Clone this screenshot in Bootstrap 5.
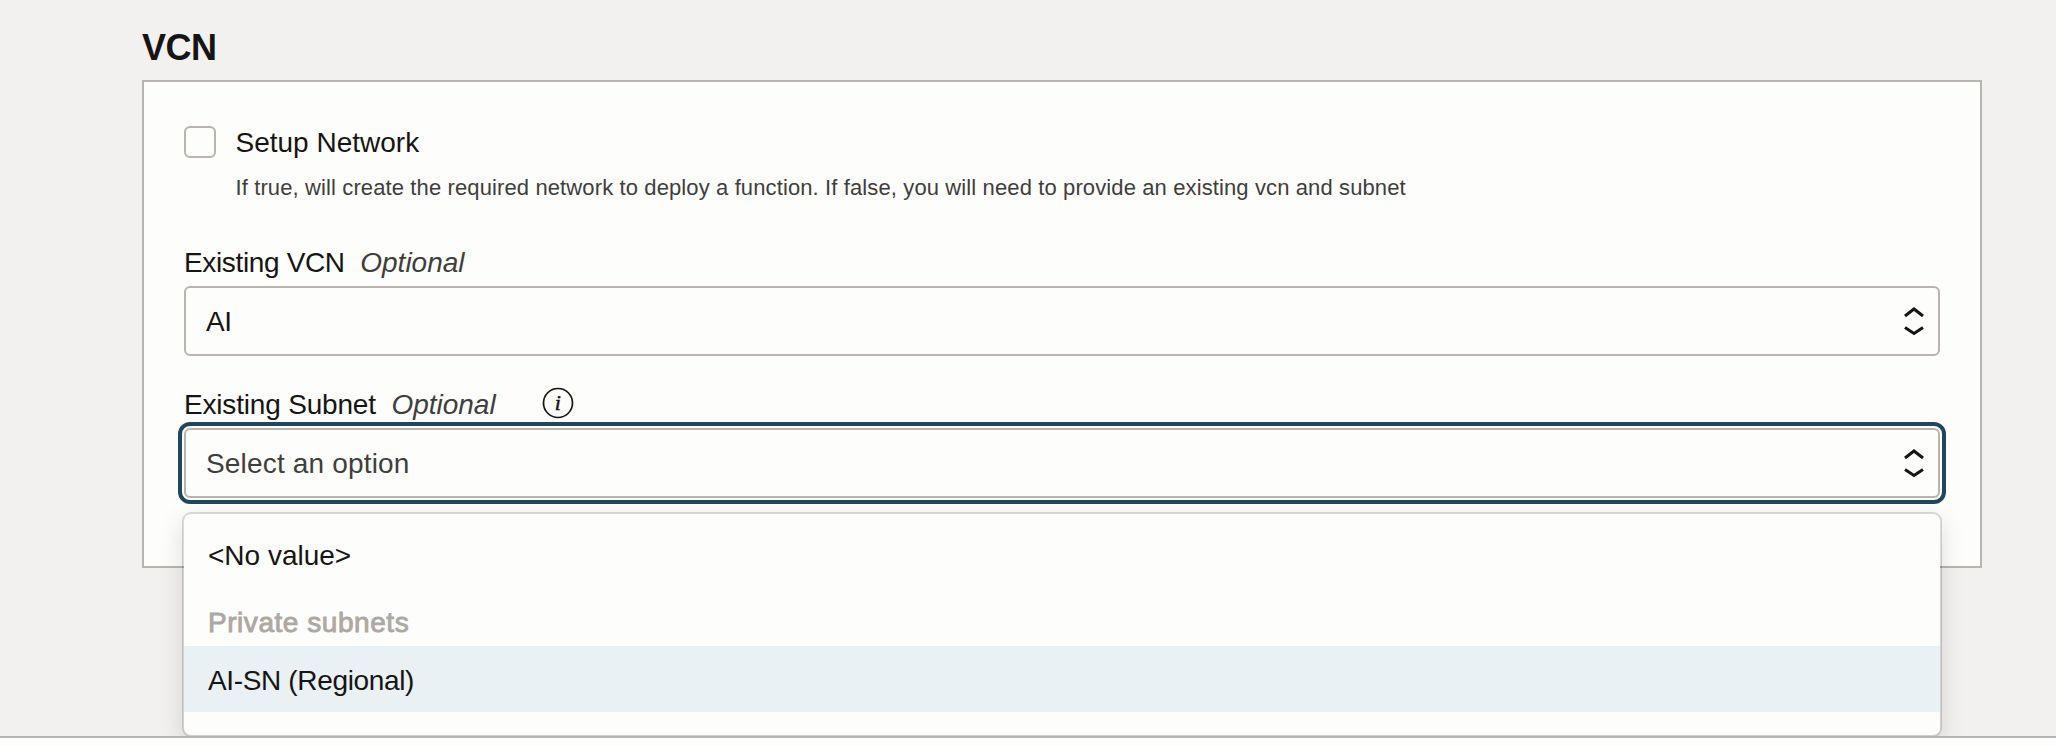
<!DOCTYPE html>
<html lang="en">
<head>
<meta charset="utf-8">
<title>VCN</title>
<link href="https://cdn.jsdelivr.net/npm/bootstrap@5.3.0/dist/css/bootstrap.min.css" rel="stylesheet">
<style>
  :root { --line: #b9b5ae; --surface: #fdfdfb; --ink: #161513; --soft: #403e3b; }
  body { font-family: "Liberation Sans", Arial, sans-serif; font-size: 28px; line-height: 42px; color: var(--ink); background: #f3f1f0; height: 746px; overflow: hidden; }
  main { height: 736px; padding: 24px 74px 0 142px; overflow: hidden; }
  h1 { font-size: 36px; line-height: 48px; font-weight: 700; letter-spacing: -.5px; margin: 0 0 8px; }
  .panel { height: 488px; border: 2px solid var(--line); background: var(--surface); padding: 40px; }
  .form-check-input.setup { width: 32px; height: 32px; margin: 4px 0 0; border: 2px solid var(--line); border-radius: 6px; background-color: var(--surface); }
  .setup-text { margin-left: 19.5px; }
  .help { font-size: 22px; line-height: 32px; letter-spacing: .117px; color: var(--soft); margin-top: 8px; white-space: nowrap; }
  .field-label { height: 40px; }
  .field-label + .picker, .field-label + .position-relative { margin-top: 4px; }
  .label-vcn { margin-top: 38px; }
  .label-subnet { margin-top: 28px; }
  .optional { font-style: italic; color: var(--soft); margin-left: 15.5px; }
  .info { margin: 3px 0 0 46.5px; }
  .picker { height: 70px; border: 2px solid var(--line); border-radius: 6px; background: var(--surface); padding: 0 14px 0 20px; }
  .picker > span { margin-top: 2px; }
  .picker.active { outline: 4px solid #1f485f; outline-offset: 2px; }
  .placeholder-text { color: var(--soft); letter-spacing: .17px; }
  .options { top: 84px; left: -2px; right: -2px; height: 225px; padding: 21px 0 0; border: 2px solid rgba(0,0,0,.14); border-radius: 9px; background: var(--surface); background-clip: padding-box; box-shadow: 0 8px 24px rgba(0,0,0,.13); z-index: 2; }
  .options > div { padding-left: 24px; }
  .group-name { margin-top: 25px; color: #aea8a2; letter-spacing: .55px; -webkit-text-stroke: .9px #aea8a2; }
  .choice { margin-top: 2px; background: #e9f1f5; height: 66px; line-height: 70px; letter-spacing: -.35px; }
  footer { height: 10px; border-top: 2px solid var(--line); background: var(--surface); }
</style>
</head>
<body>
<main>
  <h1>VCN</h1>
  <section class="panel">
    <div class="d-flex align-items-start">
      <input class="form-check-input setup flex-shrink-0" type="checkbox" id="setup">
      <div class="setup-text">
        <label class="d-block" for="setup">Setup Network</label>
        <div class="help">If true, will create the required network to deploy a function. If false, you will need to provide an existing vcn and subnet</div>
      </div>
    </div>
    <div class="field-label label-vcn d-flex">
      <span style="letter-spacing:-.35px">Existing VCN</span><span class="optional">Optional</span>
    </div>
    <div class="picker d-flex align-items-center justify-content-between">
      <span style="letter-spacing:-.5px">AI</span>
      <svg width="20" height="30" viewBox="0 0 20 30" fill="none" stroke="#161513" stroke-width="3"><path d="M1 10 10 3 19 10M1 21.500 10 27.500 19 21.500"/></svg>
    </div>
    <div class="field-label label-subnet d-flex">
      <span style="letter-spacing:-.18px">Existing Subnet</span><span class="optional">Optional</span>
      <svg class="info" width="32" height="32" viewBox="0 0 32 32"><circle cx="16" cy="16" r="14.500" fill="none" stroke="#161513" stroke-width="1.700"/><text x="12.800" y="22.500" font-family="Liberation Serif, serif" font-style="italic" font-size="22" fill="#161513" stroke="#161513" stroke-width=".5">i</text></svg>
    </div>
    <div class="position-relative">
      <div class="picker active d-flex align-items-center justify-content-between">
        <span class="placeholder-text">Select an option</span>
        <svg width="20" height="30" viewBox="0 0 20 30" fill="none" stroke="#161513" stroke-width="3"><path d="M1 10 10 3 19 10M1 21.500 10 27.500 19 21.500"/></svg>
      </div>
      <div class="options position-absolute">
        <div>&lt;No value&gt;</div>
        <div class="group-name">Private subnets</div>
        <div class="choice">AI-SN (Regional)</div>
      </div>
    </div>
  </section>
</main>
<footer></footer>
<script src="https://cdn.jsdelivr.net/npm/bootstrap@5.3.0/dist/js/bootstrap.bundle.min.js"></script>
</body>
</html>
